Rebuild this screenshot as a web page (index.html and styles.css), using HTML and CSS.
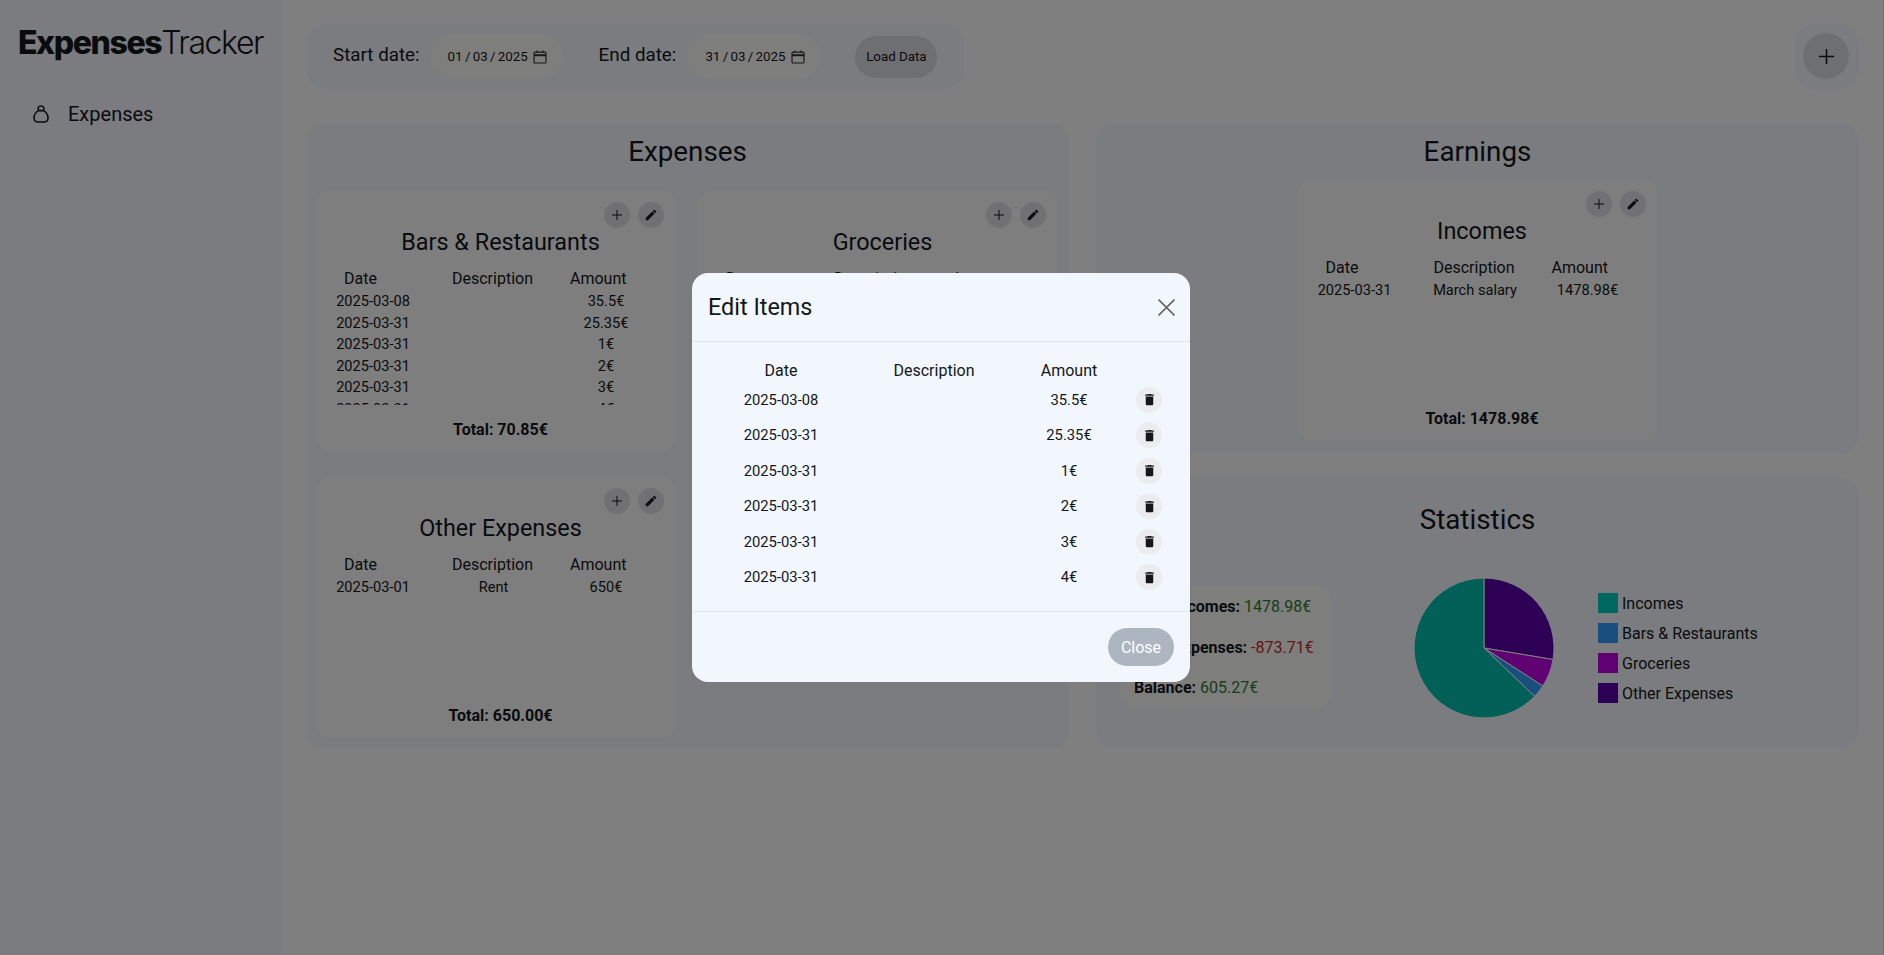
FILE: index.html
```html
<!DOCTYPE html>
<html lang="en">
  <head>
    <meta charset="UTF-8" />
    <meta name="viewport" content="width=device-width, initial-scale=1.0" />
    <title>Expenses Tracker</title>
    <link rel="stylesheet" href="styles.css">
  </head>
  <body>
    <aside class="sidebar">
      <div class="logo"><b>Expenses</b><span>Tracker</span></div>
      <a class="nav-item" href="#">
        <svg class="nav-icon" viewBox="0 0 16 18" fill="none" stroke="currentColor" stroke-width="1.6">
          <path d="M5.6 5.6 C4.4 3.6 5.2 1 8 1 C10.8 1 11.6 3.6 10.4 5.6" />
          <path d="M5.6 5.6 H10.4 C13 7 15 10 15 13 C15 15.6 13.4 17 11 17 H5 C2.6 17 1 15.6 1 13 C1 10 3 7 5.6 5.6 Z" />
        </svg>
        Expenses
      </a>
    </aside>

    <main class="main">
      <div class="topbar">
        <div class="date-filter">
          <label class="date-label">Start date:</label>
          <div class="date-input">
            01 / 03 / 2025
            <svg class="cal-icon" viewBox="0 0 14 14" fill="none" stroke="currentColor" stroke-width="1.2">
              <rect x="1" y="2.2" width="12" height="10.8" rx="1" />
              <path d="M1 5.2 H13" stroke-width="2" />
              <path d="M4 .5 V3 M10 .5 V3" />
            </svg>
          </div>
          <label class="date-label end">End date:</label>
          <div class="date-input">
            31 / 03 / 2025
            <svg class="cal-icon" viewBox="0 0 14 14" fill="none" stroke="currentColor" stroke-width="1.2">
              <rect x="1" y="2.2" width="12" height="10.8" rx="1" />
              <path d="M1 5.2 H13" stroke-width="2" />
              <path d="M4 .5 V3 M10 .5 V3" />
            </svg>
          </div>
          <button class="load-btn">Load Data</button>
        </div>
        <div class="add-box">
          <button class="add-btn">
            <svg viewBox="0 0 15 15" width="15" height="15" stroke="currentColor" stroke-width="1.5"><path d="M7.5 0 V15 M0 7.5 H15" /></svg>
          </button>
        </div>
      </div>

      <div class="columns">
        <section class="panel expenses-panel">
          <h2 class="panel-title">Expenses</h2>
          <div class="card-grid">

            <div class="card">
              <div class="card-actions">
                <button class="icon-btn"><svg viewBox="0 0 10 10" width="10" height="10" stroke="currentColor"><path d="M5 0 V10 M0 5 H10" /></svg></button>
                <button class="icon-btn"><svg viewBox="0 0 24 24" width="14" height="14" fill="currentColor"><path d="M3 17.25V21h3.75L17.81 9.94l-3.75-3.75L3 17.25zM20.71 7.04c.39-.39.39-1.02 0-1.41l-2.34-2.34c-.39-.39-1.02-.39-1.41 0l-1.83 1.83 3.75 3.75 1.83-1.83z" /></svg></button>
              </div>
              <h3 class="card-title">Bars &amp; Restaurants</h3>
              <div class="table-head"><span>Date</span><span>Description</span><span>Amount</span></div>
              <div class="table-body">
                <div class="table-row"><span>2025-03-08</span><span></span><span>35.5€</span></div>
                <div class="table-row"><span>2025-03-31</span><span></span><span>25.35€</span></div>
                <div class="table-row"><span>2025-03-31</span><span></span><span>1€</span></div>
                <div class="table-row"><span>2025-03-31</span><span></span><span>2€</span></div>
                <div class="table-row"><span>2025-03-31</span><span></span><span>3€</span></div>
                <div class="table-row"><span>2025-03-31</span><span></span><span>4€</span></div>
              </div>
              <div class="card-total">Total: 70.85€</div>
            </div>

            <div class="card">
              <div class="card-actions">
                <button class="icon-btn"><svg viewBox="0 0 10 10" width="10" height="10" stroke="currentColor"><path d="M5 0 V10 M0 5 H10" /></svg></button>
                <button class="icon-btn"><svg viewBox="0 0 24 24" width="14" height="14" fill="currentColor"><path d="M3 17.25V21h3.75L17.81 9.94l-3.75-3.75L3 17.25zM20.71 7.04c.39-.39.39-1.02 0-1.41l-2.34-2.34c-.39-.39-1.02-.39-1.41 0l-1.83 1.83 3.75 3.75 1.83-1.83z" /></svg></button>
              </div>
              <h3 class="card-title">Groceries</h3>
              <div class="table-head"><span>Date</span><span>Description</span><span>Amount</span></div>
              <div class="table-body"></div>
              <div class="card-total">Total: 152.86€</div>
            </div>

            <div class="card">
              <div class="card-actions">
                <button class="icon-btn"><svg viewBox="0 0 10 10" width="10" height="10" stroke="currentColor"><path d="M5 0 V10 M0 5 H10" /></svg></button>
                <button class="icon-btn"><svg viewBox="0 0 24 24" width="14" height="14" fill="currentColor"><path d="M3 17.25V21h3.75L17.81 9.94l-3.75-3.75L3 17.25zM20.71 7.04c.39-.39.39-1.02 0-1.41l-2.34-2.34c-.39-.39-1.02-.39-1.41 0l-1.83 1.83 3.75 3.75 1.83-1.83z" /></svg></button>
              </div>
              <h3 class="card-title">Other Expenses</h3>
              <div class="table-head"><span>Date</span><span>Description</span><span>Amount</span></div>
              <div class="table-body">
                <div class="table-row"><span>2025-03-01</span><span>Rent</span><span>650€</span></div>
              </div>
              <div class="card-total">Total: 650.00€</div>
            </div>

          </div>
        </section>

        <div class="right-col">
          <section class="panel earnings-panel">
            <h2 class="panel-title">Earnings</h2>
            <div class="card income-card">
              <div class="card-actions">
                <button class="icon-btn"><svg viewBox="0 0 10 10" width="10" height="10" stroke="currentColor"><path d="M5 0 V10 M0 5 H10" /></svg></button>
                <button class="icon-btn"><svg viewBox="0 0 24 24" width="14" height="14" fill="currentColor"><path d="M3 17.25V21h3.75L17.81 9.94l-3.75-3.75L3 17.25zM20.71 7.04c.39-.39.39-1.02 0-1.41l-2.34-2.34c-.39-.39-1.02-.39-1.41 0l-1.83 1.83 3.75 3.75 1.83-1.83z" /></svg></button>
              </div>
              <h3 class="card-title">Incomes</h3>
              <div class="table-head"><span>Date</span><span>Description</span><span>Amount</span></div>
              <div class="table-body">
                <div class="table-row"><span>2025-03-31</span><span>March salary</span><span>1478.98€</span></div>
              </div>
              <div class="card-total">Total: 1478.98€</div>
            </div>
          </section>

          <section class="panel stats-panel">
            <h2 class="panel-title">Statistics</h2>
            <div class="stats-row">
              <div class="stats-box">
                <div><b>Total Incomes:</b> <span class="pos">1478.98€</span></div>
                <div><b>Total Expenses:</b> <span class="neg">-873.71€</span></div>
                <div><b>Balance:</b> <span class="pos">605.27€</span></div>
              </div>
              <svg class="pie" viewBox="-71 -71 142 142" width="142" height="142" stroke="#fff" stroke-width="1">
                <path fill="#5a00aa" d="M0 0 V-70 A70 70 0 0 1 69.04 11.5 Z" />
                <path fill="#be00e6" d="M0 0 L69.04 11.5 A70 70 0 0 1 58.8 37.97 Z" />
                <path fill="#329ffe" d="M0 0 L58.8 37.97 A70 70 0 0 1 50.63 48.34 Z" />
                <path fill="#00c0b0" d="M0 0 L50.63 48.34 A70 70 0 1 1 0 -70 Z" />
              </svg>
              <ul class="legend">
                <li><i class="swatch teal"></i>Incomes</li>
                <li><i class="swatch blue"></i>Bars &amp; Restaurants</li>
                <li><i class="swatch violet"></i>Groceries</li>
                <li><i class="swatch indigo"></i>Other Expenses</li>
              </ul>
            </div>
          </section>
        </div>
      </div>
    </main>

    <!-- Edit items modal -->
    <div class="backdrop">
      <div class="modal">
        <div class="modal-header">
          <h4 class="modal-title">Edit Items</h4>
          <svg class="modal-close" viewBox="0 0 16 16" stroke="currentColor" stroke-width="1.5"><path d="M.5 .5 L15.5 15.5 M15.5 .5 L.5 15.5" /></svg>
        </div>
        <div class="modal-body">
          <div class="edit-head"><span>Date</span><span>Description</span><span>Amount</span><span></span></div>
          <div class="edit-row"><span>2025-03-08</span><span></span><span>35.5€</span><button class="trash-btn"><svg viewBox="0 0 24 24" width="15" height="15" fill="currentColor"><path d="M6 19c0 1.1.9 2 2 2h8c1.1 0 2-.9 2-2V7H6v12zM19 4h-3.5l-1-1h-5l-1 1H5v2h14V4z" /></svg></button></div>
          <div class="edit-row"><span>2025-03-31</span><span></span><span>25.35€</span><button class="trash-btn"><svg viewBox="0 0 24 24" width="15" height="15" fill="currentColor"><path d="M6 19c0 1.1.9 2 2 2h8c1.1 0 2-.9 2-2V7H6v12zM19 4h-3.5l-1-1h-5l-1 1H5v2h14V4z" /></svg></button></div>
          <div class="edit-row"><span>2025-03-31</span><span></span><span>1€</span><button class="trash-btn"><svg viewBox="0 0 24 24" width="15" height="15" fill="currentColor"><path d="M6 19c0 1.1.9 2 2 2h8c1.1 0 2-.9 2-2V7H6v12zM19 4h-3.5l-1-1h-5l-1 1H5v2h14V4z" /></svg></button></div>
          <div class="edit-row"><span>2025-03-31</span><span></span><span>2€</span><button class="trash-btn"><svg viewBox="0 0 24 24" width="15" height="15" fill="currentColor"><path d="M6 19c0 1.1.9 2 2 2h8c1.1 0 2-.9 2-2V7H6v12zM19 4h-3.5l-1-1h-5l-1 1H5v2h14V4z" /></svg></button></div>
          <div class="edit-row"><span>2025-03-31</span><span></span><span>3€</span><button class="trash-btn"><svg viewBox="0 0 24 24" width="15" height="15" fill="currentColor"><path d="M6 19c0 1.1.9 2 2 2h8c1.1 0 2-.9 2-2V7H6v12zM19 4h-3.5l-1-1h-5l-1 1H5v2h14V4z" /></svg></button></div>
          <div class="edit-row"><span>2025-03-31</span><span></span><span>4€</span><button class="trash-btn"><svg viewBox="0 0 24 24" width="15" height="15" fill="currentColor"><path d="M6 19c0 1.1.9 2 2 2h8c1.1 0 2-.9 2-2V7H6v12zM19 4h-3.5l-1-1h-5l-1 1H5v2h14V4z" /></svg></button></div>
        </div>
        <div class="modal-footer">
          <button class="close-btn">Close</button>
        </div>
      </div>
    </div>
  </body>
</html>
```

FILE: styles.css
```css
* {
  box-sizing: border-box;
}
body {
  margin: 0;
  height: 100vh;
  overflow: hidden;
  display: flex;
  background-color: #fff;
  color: #14161a;
  font-family: Roboto, "Liberation Sans", sans-serif;
}
button {
  font-family: inherit;
  border: none;
  color: inherit;
  padding: 0;
}

/* Sidebar */
.sidebar {
  width: 282px;
  flex-shrink: 0;
  background-color: #f4f8ff;
  padding: 23px 0 0 18px;
}
.logo {
  font-family: Inter, Roboto, sans-serif;
  font-size: 32px;
  line-height: 39px;
  letter-spacing: -1.4px;
  white-space: nowrap;
}
.logo b {
  font-weight: 800;
}
.logo span {
  font-weight: 300;
}
.nav-item {
  display: flex;
  align-items: center;
  gap: 19px;
  margin: 37px 0 0 15px;
  font-size: 20px;
  line-height: 30px;
  color: inherit;
  text-decoration: none;
}
.nav-icon {
  width: 16px;
  height: 18px;
}

/* Main area */
.main {
  flex: 1;
  padding: 24px 24px 0 24px;
  border-right: 1px solid #e0dce8;
}
.topbar {
  display: flex;
  justify-content: space-between;
}
.date-filter {
  display: flex;
  align-items: center;
  height: 65px;
  padding: 0 27px;
  background-color: #f4f8ff;
  border-radius: 20px;
}
.date-label {
  font-size: 18.8px;
  margin: 0 11px 4px 0;
}
.date-label.end {
  margin: 0 12px 4px 36px;
}
.date-input {
  display: flex;
  align-items: center;
  gap: 5px;
  width: 132px;
  height: 45px;
  padding-left: 17px;
  font-size: 13.33px;
  word-spacing: -1px;
  background-color: #fdfdfb;
  border-radius: 22px;
}
.cal-icon {
  width: 14px;
  height: 14px;
  color: #333;
}
.load-btn {
  width: 82px;
  height: 42px;
  margin: 0 0 0 35px;
  font-size: 13.33px;
  background-color: #dcdee2;
  border-radius: 21px;
}
.add-box {
  padding: 9px 0 0 8px;
  width: 64px;
  height: 65px;
  background-color: #f4f8ff;
  border-radius: 20px;
}
.add-btn {
  display: flex;
  align-items: center;
  justify-content: center;
  width: 46px;
  height: 46px;
  background-color: #dcdee2;
  border-radius: 50%;
}

.columns {
  display: grid;
  grid-template-columns: 1fr 1fr;
  gap: 27px;
  align-items: start;
  margin-top: 33px;
}
.right-col {
  display: flex;
  flex-direction: column;
  gap: 23px;
}
.panel {
  background-color: #f4f8ff;
  border-radius: 20px;
  padding: 13px 10px 0;
}
.panel-title {
  margin: 0;
  font-size: 27.8px;
  font-weight: 400;
  line-height: 34px;
  text-align: center;
}
.expenses-panel {
  height: 628px;
}
.card-grid {
  display: grid;
  grid-template-columns: 360px 360px;
  gap: 24px 22px;
  margin-top: 21px;
}
.earnings-panel {
  height: 332px;
}
.income-card {
  width: 360px;
  margin: 10px auto 0;
}

/* Category cards */
.card {
  display: flex;
  flex-direction: column;
  height: 262px;
  padding: 12px 0 13px 9px;
  background-color: #fdfdfd;
  border-radius: 16px;
}
.card-actions {
  display: flex;
  justify-content: flex-end;
  gap: 8px;
  padding-right: 12px;
}
.icon-btn {
  display: flex;
  align-items: center;
  justify-content: center;
  width: 26px;
  height: 26px;
  background-color: #e2e2e6;
  border-radius: 50%;
}
.card-title {
  margin: 0;
  font-size: 23.4px;
  font-weight: 400;
  line-height: 29px;
  text-align: center;
}
.table-head {
  display: grid;
  grid-template-columns: 108px 118px auto;
  padding-left: 19px;
  margin-top: 11px;
  font-size: 16px;
  line-height: 22px;
}
.table-body {
  height: 114px;
  margin: 1px 12px 0 1px;
  overflow-y: auto;
  font-size: 14.6px;
}
.table-body::-webkit-scrollbar {
  width: 8px;
}
.table-body::-webkit-scrollbar-track {
  background: #f1f1f1;
}
.table-body::-webkit-scrollbar-thumb {
  background: #cecece;
}
.table-row {
  display: grid;
  grid-template-columns: 94px 147px 78px;
  line-height: 21.6px;
  text-align: center;
}
.card-total {
  margin-top: auto;
  font-size: 16px;
  font-weight: 700;
  line-height: 19px;
  text-align: center;
}

/* Statistics */
.stats-panel {
  height: 271px;
  padding-top: 26px;
}
.stats-row {
  display: flex;
  align-items: flex-start;
  margin-top: 41px;
  padding-left: 14px;
}
.stats-box {
  display: flex;
  flex-direction: column;
  gap: 21.5px;
  width: 212px;
  height: 122px;
  margin-top: 8px;
  padding: 11px 14px;
  font-size: 16px;
  line-height: 19px;
  background-color: #fdfdfb;
  border-radius: 16px;
}
.stats-box b {
  font-weight: 700;
}
.pos {
  color: #2e7d32;
}
.neg {
  color: #c62828;
}
.pie {
  margin: -1px 43px 0 81px;
}
.legend {
  list-style: none;
  margin: 15px 0 0;
  padding: 0;
  font-size: 16px;
}
.legend li {
  display: flex;
  align-items: center;
  gap: 4px;
  height: 20px;
  margin-bottom: 10px;
}
.swatch {
  width: 20px;
  height: 20px;
}
.teal {
  background-color: #00d0bd;
}
.blue {
  background-color: #329ffe;
}
.violet {
  background-color: #be00e6;
}
.indigo {
  background-color: #5a00aa;
}

/* Modal */
.backdrop {
  position: fixed;
  inset: 0;
  display: flex;
  align-items: center;
  justify-content: center;
  background-color: rgba(0, 0, 0, 0.5);
}
.modal {
  width: 498px;
  height: 409px;
  margin-right: 2px;
  background-color: #f2f6fd;
  border-radius: 16px;
}
.modal-header {
  display: flex;
  align-items: center;
  justify-content: space-between;
  height: 69px;
  padding: 0 15.5px 0 16px;
  border-bottom: 1px solid #dfe3ec;
}
.modal-title {
  margin: 0;
  font-size: 23.4px;
  font-weight: 400;
  line-height: 29px;
}
.modal-close {
  width: 17px;
  height: 17px;
  color: #666;
}
.modal-body {
  padding: 16px 17px 16px 16px;
  height: 269px;
}
.edit-head,
.edit-row {
  display: grid;
  grid-template-columns: 146px 160px 110px 50px;
  align-items: center;
  justify-items: center;
}
.edit-head {
  height: 24px;
  font-size: 16px;
}
.edit-row {
  height: 35.5px;
  font-size: 14.8px;
}
.trash-btn {
  display: flex;
  align-items: center;
  justify-content: center;
  width: 26px;
  height: 26px;
  background-color: #ebecef;
  border-radius: 50%;
}
.modal-footer {
  display: flex;
  justify-content: flex-end;
  padding: 16px;
  border-top: 1px solid #dfe3ec;
}
.close-btn {
  width: 66px;
  height: 38px;
  font-size: 16px;
  color: #fff;
  background-color: #adb5c0;
  border-radius: 19px;
}
```
